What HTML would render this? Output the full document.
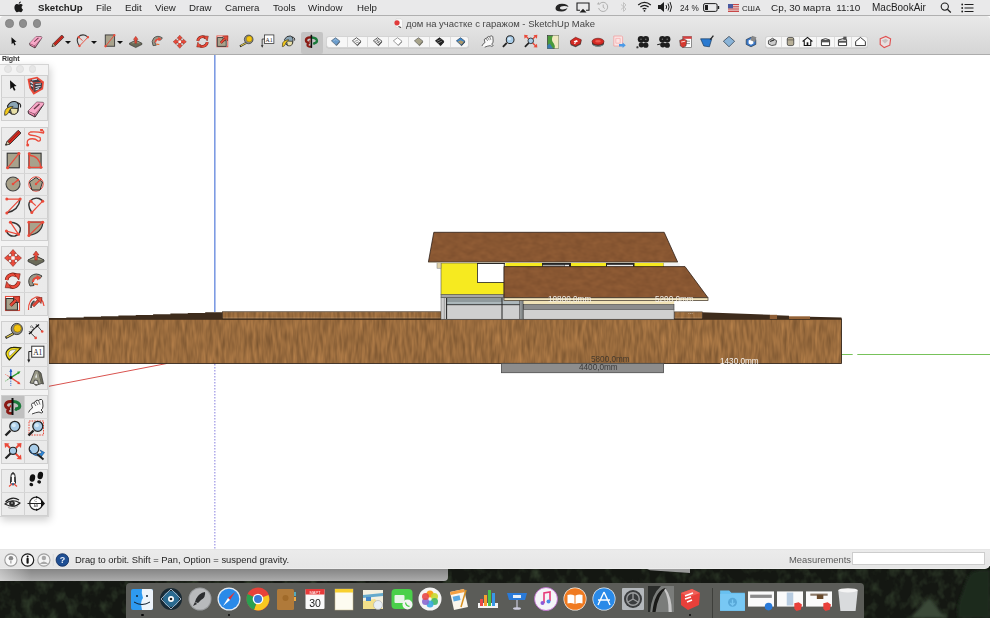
<!DOCTYPE html><html><head><meta charset="utf-8"><style>
*{margin:0;padding:0;box-sizing:border-box}
html,body{width:990px;height:618px;overflow:hidden;background:#fff;font-family:"Liberation Sans",sans-serif}
.a{position:absolute}
span{will-change:transform}
#menubar{left:0;top:0;width:990px;height:15.5px;background:#e9e9ea;border-bottom:1px solid #b0b0b0}
#menubar span{position:absolute;top:2px;font-size:9.7px;color:#1e1e1e;line-height:11px;white-space:nowrap}
#titlebar{left:0;top:15.5px;width:990px;height:39.5px;background:linear-gradient(#e9e9e9,#d5d5d5);border-bottom:1px solid #acacac;border-radius:4px 4px 0 0}
.tl{position:absolute;width:8.4px;height:8.4px;border-radius:50%;background:#8e8e8e;border:0.5px solid #848484}
.ti{position:absolute;top:17px}
.cell{position:absolute;width:23px;height:22.6px;background:linear-gradient(#efefef,#e6e6e6);border:1px solid #d2d2d2;display:flex;align-items:center;justify-content:center}
.cell svg{display:block}
#status{left:0;top:549px;width:990px;height:20px;background:linear-gradient(#ebebeb,#e6e6e6 92%,#f0f0f0);border-top:1px solid #e6e6e6;border-radius:0 0 5px 0}
.dd{position:absolute;width:0;height:0;border-left:3px solid transparent;border-right:3px solid transparent;border-top:3.5px solid #111}
</style></head><body>
<div class="a" style="left:0;top:566px;width:990px;height:52px;background:#141712"></div>
<svg class="a" style="left:0;top:566px" width="990" height="52">
<defs><filter id="forest" color-interpolation-filters="sRGB"><feTurbulence type="fractalNoise" baseFrequency="0.09 0.07" numOctaves="3" seed="21"/><feColorMatrix type="matrix" values="0 0 0 0 0.19  0 0 0 0 0.24  0 0 0 0 0.17  2.2 0 0 0 -1.0"/><feGaussianBlur stdDeviation="0.7"/></filter>
<filter id="blur1"><feGaussianBlur stdDeviation="1.5"/></filter></defs>
<rect width="990" height="52" filter="url(#forest)"/>
<g filter="url(#blur1)">
<path d="M910 52 Q918 44 923 38 Q928 32 931 34 Q936 40 940 46 Q946 50 948 52Z" fill="#3a4838"/>
<path d="M958 52 Q956 40 962 28 Q966 12 972 6 Q980 3 990 4 L990 52Z" fill="#1f2b1f"/>
</g>
</svg>
<div class="a" style="left:0;top:566px;width:448px;height:14.5px;background:linear-gradient(90deg,rgba(255,255,255,0.45),rgba(255,255,255,0) 7%),linear-gradient(#7c7c7c,#939393 50%,#acacac);border-radius:0 0 4px 0"></div>
<div class="a" style="left:640px;top:566px;width:50px;height:7px;background:#9a9a9a;clip-path:polygon(0 0,100% 0,100% 100%,20% 60%)"></div>
<div id="menubar" class="a">
<svg class="a" style="left:13.5px;top:1px" width="10.5" height="11.5" viewBox="0 0 20 22"><path d="M14.5 11.8c0-2.6 2.1-3.8 2.2-3.9-1.2-1.8-3.1-2-3.7-2-1.6-.2-3.1.9-3.9.9-.8 0-2-.9-3.3-.9C4.1 6 2.5 7 1.6 8.6c-1.8 3.2-.5 7.9 1.3 10.4.9 1.3 1.9 2.7 3.2 2.6 1.3-.1 1.8-.8 3.3-.8s2 .8 3.3.8c1.4 0 2.2-1.3 3.1-2.5 1-1.4 1.4-2.8 1.4-2.9-.1 0-2.7-1-2.7-4.4zM12 4c.7-.9 1.2-2 1-3.2-1 0-2.2.7-2.9 1.5-.6.7-1.2 1.9-1 3.1 1.1.1 2.2-.6 2.9-1.4z" fill="#1a1a1a"/></svg>
<span style="left:38px;font-weight:bold;">SketchUp</span>
<span style="left:96px;">File</span>
<span style="left:124.5px;">Edit</span>
<span style="left:154.5px;">View</span>
<span style="left:188.5px;">Draw</span>
<span style="left:225px;">Camera</span>
<span style="left:272.5px;">Tools</span>
<span style="left:308px;">Window</span>
<span style="left:357px;">Help</span>
<svg class="a" style="left:554px;top:1.5px" width="16" height="11" viewBox="0 0 16 11"><path d="M1.5 6 Q2 2 8 1.8 Q14 2 14.5 5 Q12 3.8 8.5 4.2 Q5.5 4.8 6 6.5 Q7 8 10 7.3 Q12.5 6.8 13.5 5.8 Q12.5 9.5 7.5 9.5 Q1.2 9.5 1.5 6Z" fill="#262626"/></svg>
<svg class="a" style="left:575.5px;top:1.8px" width="14" height="11" viewBox="0 0 14 11"><path d="M4 8.2 H1 V1 H13 V8.2 H10" fill="none" stroke="#1e1e1e" stroke-width="1.1"/><path d="M3.5 10.6 L7 6.8 L10.5 10.6Z" fill="#1e1e1e"/></svg>
<svg class="a" style="left:596px;top:1px" width="13" height="12" viewBox="0 0 13 12"><path d="M2.6 7 A4.6 4.6 0 1 0 3.5 3" fill="none" stroke="#b0b0b0" stroke-width="1"/><path d="M7.2 3.5 V6.3 L8.8 7.5" stroke="#b0b0b0" stroke-width="1" fill="none"/><path d="M0.8 3.2 L3.8 3.8 L2.8 1Z" fill="#b0b0b0"/></svg>
<svg class="a" style="left:620px;top:1px" width="8" height="12" viewBox="0 0 8 12"><path d="M1 3.5 L6 8 L3.5 10.5 V1.5 L6 4 L1 8.5" fill="none" stroke="#c0c0c0" stroke-width="0.9"/></svg>
<svg class="a" style="left:637px;top:1.2px" width="15" height="11" viewBox="0 0 15 11"><path d="M1.2 4 Q7.5 -1.2 13.8 4" stroke="#1e1e1e" stroke-width="1.3" fill="none"/><path d="M3.4 6 Q7.5 2.6 11.6 6" stroke="#1e1e1e" stroke-width="1.3" fill="none"/><path d="M5.6 8 Q7.5 6.6 9.4 8" stroke="#1e1e1e" stroke-width="1.3" fill="none"/><circle cx="7.5" cy="9.8" r="0.9" fill="#1e1e1e"/></svg>
<svg class="a" style="left:657px;top:0.8px" width="16" height="12" viewBox="0 0 16 12"><path d="M1 4 H3.5 L7 1 V11 L3.5 8 H1Z" fill="#1e1e1e"/><path d="M9 4 Q10.3 6 9 8 M11 2.5 Q13.2 6 11 9.5 M13 1 Q16 6 13 11" stroke="#1e1e1e" stroke-width="1" fill="none"/></svg>
<span style="left:680px;font-size:8.2px;top:2.5px">24 %</span>
<svg class="a" style="left:703px;top:3px" width="17" height="9" viewBox="0 0 17 9"><rect x="0.6" y="0.6" width="13.5" height="7.8" rx="1.5" fill="none" stroke="#1e1e1e" stroke-width="1"/><rect x="2" y="2" width="3" height="5" fill="#1e1e1e"/><rect x="14.8" y="3" width="1.4" height="3" fill="#1e1e1e"/></svg>
<svg class="a" style="left:728px;top:3.5px" width="11" height="8" viewBox="0 0 11 8"><rect width="11" height="8" fill="#c84848"/><rect y="1.2" width="11" height="1" fill="#eee"/><rect y="3.4" width="11" height="1" fill="#eee"/><rect y="5.6" width="11" height="1" fill="#eee"/><rect width="5" height="4.3" fill="#4a5aa0"/></svg>
<span style="left:742px;font-size:7.8px;top:3px;letter-spacing:0.2px">США</span>
<span style="left:770.5px;font-size:9.95px">Ср, 30 марта&nbsp; 11:10</span>
<span style="left:872px;font-size:10px">MacBookAir</span>
<svg class="a" style="left:940px;top:2px" width="12" height="11" viewBox="0 0 12 11"><circle cx="4.8" cy="4.6" r="3.6" fill="none" stroke="#1e1e1e" stroke-width="1.1"/><path d="M7.4 7.2 L10.8 10.5" stroke="#1e1e1e" stroke-width="1.3"/></svg>
<svg class="a" style="left:961px;top:2.5px" width="13" height="10" viewBox="0 0 13 10"><circle cx="1.2" cy="1.5" r="0.9" fill="#1e1e1e"/><circle cx="1.2" cy="5" r="0.9" fill="#1e1e1e"/><circle cx="1.2" cy="8.5" r="0.9" fill="#1e1e1e"/><path d="M3.5 1.5 H12.5 M3.5 5 H12.5 M3.5 8.5 H12.5" stroke="#1e1e1e" stroke-width="1.1"/></svg>
</div>
<div id="titlebar" class="a">
<div class="tl" style="left:5.4px;top:3.9px"></div>
<div class="tl" style="left:19.1px;top:3.9px"></div>
<div class="tl" style="left:32.7px;top:3.9px"></div>
<svg class="a" style="left:393px;top:2.5px" width="10" height="11" viewBox="0 0 10 11"><path d="M3 0.8 H8 L9.5 2.3 V9.5 H3Z" fill="#fafafa" stroke="#ccc" stroke-width="0.5"/><circle cx="4" cy="4.8" r="2.6" fill="#e03a3a"/><path d="M5.5 8.5 L8 9.5" stroke="#333" stroke-width="1"/></svg>
<span class="a" style="left:406px;top:2.2px;font-size:9.47px;color:#444;white-space:nowrap">дом на участке с гаражом - SketchUp Make</span>
<div class="a" style="left:301px;top:16px;width:21.5px;height:22px;background:#c4c4c4;border-radius:2px"></div>
<div class="ti" style="left:5.550000000000001px;top:18.25px"><svg width="15.5" height="15.5" viewBox="0 0 20 20" ><path d="M7 4.2 L7.3 13.2 L9.3 11.2 L11 14.8 L12.5 14 L10.9 10.4 L13.6 10.1 Z" fill="#111"/></svg></div>
<div class="ti" style="left:28.25px;top:18.25px"><svg width="15.5" height="15.5" viewBox="0 0 20 20" ><path d="M2.1 12 L10.6 3.2 L17.1 3.4 L17.9 5 L9 18 L2.5 14.5Z" fill="#f08ab0" stroke="#3a2a30" stroke-width="1"/><path d="M2.1 12 L8.7 14.8 L17.9 5" fill="none" stroke="#3a2a30" stroke-width="0.8"/><path d="M8.7 14.8 L9 18" stroke="#3a2a30" stroke-width="0.8"/><path d="M2.1 12 L10.6 3.2 L17.1 3.4 L17.9 5 L8.7 14.8Z" fill="#f8a8c8"/><path d="M8 10 L13.5 5" stroke="#6a3a4a" stroke-width="1.3"/></svg></div>
<div class="ti" style="left:49.75px;top:18.25px"><svg width="15.5" height="15.5" viewBox="0 0 20 20" ><path d="M2.6 16.1 L4.3 12.2 L15.2 1.3 L18 4.1 L7 15Z" fill="#d42a20" stroke="#2a2a2a" stroke-width="0.9"/><path d="M5.5 13.5 L16.5 2.7" stroke="#8a1a10" stroke-width="0.7"/><path d="M2.6 16.1 L4.3 12.2 L7 15Z" fill="#d8c8a0" stroke="#2a2a2a" stroke-width="0.6"/><path d="M2.6 16.1 L3.3 14.5 L4.3 15.5Z" fill="#222"/></svg></div>
<div class="ti" style="left:75.25px;top:18.25px"><svg width="15.5" height="15.5" viewBox="0 0 20 20" ><path d="M5.8 15.5 Q1 9 4 4 Q8 0 13 1.5 Q16 3 16.7 4.2" fill="none" stroke="#333" stroke-width="1.4"/><path d="M4.9 4.2 L9.8 8.6 M16.7 4.2 L5.8 15.5" fill="none" stroke="#ea4a3a" stroke-width="1.2"/><circle cx="4.9" cy="4.2" r="1.5" fill="#ea4a3a"/><circle cx="16.7" cy="4.2" r="1.5" fill="#ea4a3a"/><circle cx="5.8" cy="15.5" r="1.5" fill="#ea4a3a"/></svg></div>
<div class="ti" style="left:102.25px;top:18.25px"><svg width="15.5" height="15.5" viewBox="0 0 20 20" ><rect x="4.2" y="1.2" width="12.1" height="14.6" fill="#a8a28c" stroke="#333" stroke-width="1.1"/><path d="M4.6 15.8 L15.9 1.6" stroke="#ea4a3a" stroke-width="1.2"/><circle cx="4.6" cy="15.8" r="1.5" fill="#ea4a3a"/><circle cx="15.9" cy="1.6" r="1.5" fill="#ea4a3a"/></svg></div>
<div class="ti" style="left:128.25px;top:18.25px"><svg width="15.5" height="15.5" viewBox="0 0 20 20" ><path d="M2 12 L10 8 L18 12 L10 16 Z" fill="#9a9a80" stroke="#333" stroke-width="1"/><path d="M2 12 L2 13.5 L10 17.5 L18 13.5 L18 12" fill="#6a6a58" stroke="#333" stroke-width="0.8"/><path d="M10 3 L13 7 L11.2 7 L11.2 12 L8.8 12 L8.8 7 L7 7Z" fill="#ea4a3a" stroke="#8a1a10" stroke-width="0.5"/></svg></div>
<div class="ti" style="left:149.75px;top:18.25px"><svg width="15.5" height="15.5" viewBox="0 0 20 20" ><path d="M4 15 Q1 9 5 5 Q10 1 16 5 L13.5 8 Q10 6 7.5 8 Q5 11 8 14.5Z" fill="#9a9888" stroke="#333" stroke-width="0.9"/><path d="M7 11 Q7 7 12 6.5" stroke="#ea4a3a" stroke-width="2" fill="none"/><path d="M10.5 4 L15 6.5 L11 9.5Z" fill="#ea4a3a"/><path d="M8 13 L12 13.5" stroke="#e86a30" stroke-width="1.5"/></svg></div>
<div class="ti" style="left:172.25px;top:18.25px"><svg width="15.5" height="15.5" viewBox="0 0 20 20" ><path d="M10 1.5 L13.5 5.5 L11.5 5.5 L11.5 8.5 L14.5 8.5 L14.5 6.5 L18.5 10 L14.5 13.5 L14.5 11.5 L11.5 11.5 L11.5 14.5 L13.5 14.5 L10 18.5 L6.5 14.5 L8.5 14.5 L8.5 11.5 L5.5 11.5 L5.5 13.5 L1.5 10 L5.5 6.5 L5.5 8.5 L8.5 8.5 L8.5 5.5 L6.5 5.5Z" fill="#ea4a3a" stroke="#7a1a10" stroke-width="0.5"/><rect x="8.3" y="8.3" width="3.4" height="3.4" fill="#f4f4f4"/></svg></div>
<div class="ti" style="left:194.75px;top:18.25px"><svg width="15.5" height="15.5" viewBox="0 0 20 20" ><path d="M3.6 9 A6.2 6.2 0 0 1 13.8 5" stroke="#6a1a10" stroke-width="3.6" fill="none"/><path d="M3.6 9 A6.2 6.2 0 0 1 13.8 5" stroke="#ea4a3a" stroke-width="2.4" fill="none"/><path d="M11 2.5 L17.2 2.8 L15.8 9Z" fill="#ea4a3a" stroke="#6a1a10" stroke-width="0.6"/><path d="M15.8 10.5 A6.2 6.2 0 0 1 5.6 14.5" stroke="#6a1a10" stroke-width="3.6" fill="none"/><path d="M15.8 10.5 A6.2 6.2 0 0 1 5.6 14.5" stroke="#ea4a3a" stroke-width="2.4" fill="none"/><path d="M8.4 17 L2.2 16.7 L3.6 10.5Z" fill="#ea4a3a" stroke="#6a1a10" stroke-width="0.6"/></svg></div>
<div class="ti" style="left:215.25px;top:18.25px"><svg width="15.5" height="15.5" viewBox="0 0 20 20" ><rect x="2.5" y="2.5" width="14" height="14" fill="#fff" stroke="#ea4a3a" stroke-width="1.1"/><path d="M3 4.5 H10.5 V8.5 H14.5 V16 H3Z" fill="#a8a28c" stroke="#333" stroke-width="1.1"/><path d="M7.5 11.5 L13 6" stroke="#6a1a10" stroke-width="3.2"/><path d="M7.5 11.5 L13 6" stroke="#ea4a3a" stroke-width="2"/><path d="M10 3 L16.5 2.5 L16 9Z" fill="#ea4a3a" stroke="#6a1a10" stroke-width="0.6"/></svg></div>
<div class="ti" style="left:238.25px;top:18.25px"><svg width="15.5" height="15.5" viewBox="0 0 20 20" ><path d="M2.5 15.9 L10.5 11.5" stroke="#222" stroke-width="2.6"/><path d="M3.5 15.2 L10.5 11.5" stroke="#e8d050" stroke-width="1.3"/><circle cx="13.8" cy="7" r="5.6" fill="#8a8a88" stroke="#333" stroke-width="0.9"/><circle cx="14.5" cy="6.4" r="3.8" fill="#f4c410" stroke="#6a5a10" stroke-width="0.5"/></svg></div>
<div class="ti" style="left:260.25px;top:18.25px"><svg width="15.5" height="15.5" viewBox="0 0 20 20" ><rect x="5.7" y="1.2" width="12.2" height="11" fill="#fff" stroke="#333" stroke-width="1"/><text x="7.2" y="9.8" font-size="7.5" font-family="Liberation Serif" fill="#222">A1</text><path d="M5.7 6.5 L2.8 6.5 L2.8 15" stroke="#222" stroke-width="1" fill="none"/><path d="M1.2 14.5 L2.8 17.8 L4.4 14.5Z" fill="#222"/></svg></div>
<div class="ti" style="left:281.25px;top:18.25px"><svg width="15.5" height="15.5" viewBox="0 0 20 20" ><path d="M4.5 7 Q7 2 12 2.5 Q16 3.5 15.5 7 L15 12 Q13 15.5 9 15 L6 13Z" fill="#8aa4b4" stroke="#222" stroke-width="1.1"/><path d="M7 9 L15 9.5 L14.5 13.5 Q12 16.5 8.5 15Z" fill="#e8e0a8" stroke="#222" stroke-width="0.9"/><path d="M14 4 Q18.5 4 17.5 8.5" fill="none" stroke="#222" stroke-width="1.1"/><path d="M1.7 16.3 Q1 10.5 5 8.5 Q8.5 7 10.2 7.5 Q6.5 10 5.5 13.5 Q4 16.5 1.7 16.3Z" fill="#f2c81a" stroke="#333" stroke-width="0.8"/></svg></div>
<div class="ti" style="left:303.95px;top:18.25px"><svg width="15.5" height="15.5" viewBox="0 0 20 20" ><path d="M9 4.5 Q3 4 2.5 8 Q2.5 11 7 11.5" stroke="#8a1a14" stroke-width="3" fill="none"/><path d="M7 11.5 Q4 12.5 4.5 15 Q6 17 9.5 16" stroke="#8a1a14" stroke-width="2.6" fill="none"/><path d="M10 4.5 Q16.5 5 16.8 9 Q16.5 12 12 12" stroke="#1a7a3a" stroke-width="3" fill="none"/><path d="M11 13 L13.5 10.5 L14 14Z" fill="#1a7a3a"/><path d="M9.5 1 L9.5 18" stroke="#111" stroke-width="2"/><path d="M6 9.5 L8 7.5 L8.5 11Z" fill="#b02a20"/></svg></div>
<div class="dd" style="left:64.5px;top:25px"></div>
<div class="dd" style="left:91px;top:25px"></div>
<div class="dd" style="left:117px;top:25px"></div>
<div class="a" style="left:326px;top:20px;width:143px;height:12.5px;background:#f7f7f7;border:1px solid #d4d4d4;border-radius:3px;box-shadow:0 0.5px 0 #c0c0c0"></div>
<div class="a" style="left:346.7px;top:21px;width:1px;height:10.5px;background:#dcdcdc"></div>
<div class="a" style="left:367px;top:21px;width:1px;height:10.5px;background:#dcdcdc"></div>
<div class="a" style="left:387.5px;top:21px;width:1px;height:10.5px;background:#dcdcdc"></div>
<div class="a" style="left:408px;top:21px;width:1px;height:10.5px;background:#dcdcdc"></div>
<div class="a" style="left:429px;top:21px;width:1px;height:10.5px;background:#dcdcdc"></div>
<div class="a" style="left:450px;top:21px;width:1px;height:10.5px;background:#dcdcdc"></div>
<svg class="ti" style="left:329.8px;top:20.5px" width="11" height="11" viewBox="0 0 16 16"><path d="M2 7 L8 2.5 L14.5 7.5 L9 13.5Z" fill="#6a9ccc" stroke="#456" stroke-width="0.9"/><path d="M9 13.5 L14.5 7.5 L14 9.5 L9.5 14.5Z" fill="#456"/><path d="M5 7 L8.5 5 L11 7.5" stroke="#b8d4ec" stroke-width="0.8" fill="none"/></svg>
<svg class="ti" style="left:350.8px;top:20.5px" width="11" height="11" viewBox="0 0 16 16"><path d="M2 7 L8 2.5 L14.5 7.5 L9 13.5Z" fill="#fafafa" stroke="#333" stroke-width="1.1"/><path d="M9 13.5 L14.5 7.5 L14.3 9.5 L9.3 15Z" fill="#444"/><path d="M5 8 L10 6 M6.5 10.5 L11.5 8.5" stroke="#444" stroke-width="0.8"/></svg>
<svg class="ti" style="left:372.0px;top:20.5px" width="11" height="11" viewBox="0 0 16 16"><path d="M2 7 L8 2.5 L14.5 7.5 L9 13.5Z" fill="#f0f0f0" stroke="#333" stroke-width="1.1"/><path d="M9 13.5 L14.5 7.5 L14.3 9.5 L9.3 15Z" fill="#444"/><path d="M4.5 8.5 L9.5 5.5 M6 11 L11.5 7.5 M7 4.5 L10.5 11" stroke="#444" stroke-width="0.8"/></svg>
<svg class="ti" style="left:392.0px;top:20.5px" width="11" height="11" viewBox="0 0 16 16"><path d="M2 7 L8 2.5 L14.5 7.5 L9 13.5Z" fill="#fff" stroke="#666" stroke-width="0.9"/><path d="M9 13.5 L14.5 7.5 L14.3 9 L9.3 14.5Z" fill="#888"/></svg>
<svg class="ti" style="left:412.5px;top:20.5px" width="11" height="11" viewBox="0 0 16 16"><path d="M2 7 L8 2.5 L14.5 7.5 L9 13.5Z" fill="#a8a48a" stroke="#555" stroke-width="0.9"/><path d="M9 13.5 L14.5 7.5 L14.3 9.5 L9.3 15Z" fill="#6a6858"/></svg>
<svg class="ti" style="left:433.5px;top:20.5px" width="11" height="11" viewBox="0 0 16 16"><path d="M2 7 L8 2.5 L14.5 7.5 L9 13.5Z" fill="#1a1a1a" stroke="#111" stroke-width="0.9"/><path d="M9 13.5 L14.5 7.5 L14.3 9.5 L9.3 15Z" fill="#111"/><path d="M4.5 7.5 L9.5 5 M6 10 L11.5 7.5" stroke="#bbb" stroke-width="0.9"/></svg>
<svg class="ti" style="left:454.5px;top:20.5px" width="11" height="11" viewBox="0 0 16 16"><path d="M2 7 L8 2.5 L14.5 7.5 L9 13.5Z" fill="#3a88d0" stroke="#234" stroke-width="0.9"/><path d="M4 8.5 L8 6 L13 8.5 L9.5 12.5Z" fill="#b09868"/><path d="M9 13.5 L14.5 7.5 L14.3 9.5 L9.3 15Z" fill="#234"/></svg>
<div class="ti" style="left:479.75px;top:18.25px"><svg width="15.5" height="15.5" viewBox="0 0 20 20" ><path d="M2.5 15.5 Q4 12 6.5 11 L5.5 7.5 Q6 5.5 8 6 L9.5 4 Q11 2.5 12.5 3.5 L14 2.5 Q16 2 16.5 3.5 L17 9 Q17 12 15 13 L17 15 Q15.5 17 13 15 Q9.5 15.5 6 17" fill="#fafafa" stroke="#2a2a2a" stroke-width="0.9"/><path d="M8 6 L10 9 M9.5 4 L12 8 M12.5 3.5 L14 7.5" stroke="#2a2a2a" stroke-width="0.7"/></svg></div>
<div class="ti" style="left:501.25px;top:18.25px"><svg width="15.5" height="15.5" viewBox="0 0 20 20" ><path d="M2.5 16.5 L7.5 11.5" stroke="#222" stroke-width="2.4"/><circle cx="11.8" cy="7.3" r="5" fill="#a8cce8" stroke="#222" stroke-width="1.3"/><circle cx="10.8" cy="6.2" r="2" fill="#d4e8f6"/></svg></div>
<div class="ti" style="left:523.25px;top:18.25px"><svg width="15.5" height="15.5" viewBox="0 0 20 20" ><path d="M2.5 16.5 L7.5 11.5" stroke="#222" stroke-width="2.2"/><path d="M12.5 11.5 L16.5 15.5 M7 6 L4 3 M13 6 L16 3" stroke="#ea4a3a" stroke-width="1.8"/><path d="M1.5 1 L6.5 1.5 L2 6Z M18.5 1 L13.5 1.5 L18 6Z M18.5 17.5 L13.5 17 L18 12.5Z" fill="#ea4a3a"/><circle cx="10" cy="8.8" r="3.6" fill="#a8cce8" stroke="#222" stroke-width="1.1"/></svg></div>
<svg class="ti" style="left:545.0px;top:18.0px" width="16" height="16" viewBox="0 0 20 20"><rect x="3" y="2" width="14" height="16" fill="#4a9a3a" stroke="#333" stroke-width="0.8"/><path d="M10 2 Q7 8 11 12 Q13 15 12 18 L17 18 L17 2Z" fill="#f0e8c0"/><path d="M6 12 L10 18 L3 18 L3 14Z" fill="#3a7ab0"/></svg>
<svg class="ti" style="left:568.0px;top:18.0px" width="16" height="16" viewBox="0 0 20 20"><path d="M2.5 9 L9 4.5 L17 7.5 L16 13 L9.5 16.5 L3.5 14Z" fill="#555" /><path d="M3 8.5 L9.5 4 L16.5 7 L15.5 12 L9.5 15 L3.5 12.5Z" fill="#d42a24" stroke="#6a1a14" stroke-width="0.6"/><path d="M7 9 L11 7.5 L12.5 9.5 L8.5 11Z" fill="#fff"/><path d="M7.5 12 L10 11" stroke="#fff" stroke-width="1"/></svg>
<svg class="ti" style="left:589.5px;top:18.0px" width="16" height="16" viewBox="0 0 20 20"><ellipse cx="10" cy="11.5" rx="7.5" ry="4.5" fill="#444"/><ellipse cx="10" cy="9.5" rx="7.5" ry="4.2" fill="#d42a24" stroke="#5a1a14" stroke-width="0.7"/><ellipse cx="10" cy="9" rx="3.5" ry="1.5" fill="#f05a50"/><path d="M4 14 Q10 17 16 14" stroke="#8aa" stroke-width="0.8" fill="none"/></svg>
<svg class="ti" style="left:611.0px;top:18.0px" width="16" height="16" viewBox="0 0 20 20"><path d="M3.5 2.5 L13.5 2.5 L14.5 3.5 L14.5 15 L3.5 15Z" fill="#fbe4e4" stroke="#f0a0a0" stroke-width="1"/><path d="M6 5.5 L11.5 5.5 L11.5 11.5 L6 11.5Z" fill="none" stroke="#f4b0b0" stroke-width="1"/><path d="M10 12.5 L14.5 12.5 L14.5 10.5 L18.5 14 L14.5 17.5 L14.5 15.5 L10 15.5Z" fill="#4a9ae8"/></svg>
<svg class="ti" style="left:634.5px;top:18.0px" width="16" height="16" viewBox="0 0 20 20"><circle cx="7.5" cy="6.5" r="4" fill="#1e1e1e"/><circle cx="13.5" cy="6.5" r="4" fill="#1e1e1e"/><circle cx="8" cy="13.5" r="3.3" fill="#1e1e1e"/><circle cx="13.5" cy="14" r="3.3" fill="#1e1e1e"/><circle cx="7.5" cy="6.5" r="0.9" fill="#777"/><circle cx="13.5" cy="6.5" r="0.9" fill="#777"/><circle cx="3" cy="16.5" r="1.5" fill="#333" stroke="#ddd" stroke-width="0.5"/></svg>
<svg class="ti" style="left:656.0px;top:18.0px" width="16" height="16" viewBox="0 0 20 20"><circle cx="8" cy="6.5" r="4" fill="#1e1e1e"/><circle cx="14" cy="6.5" r="4" fill="#1e1e1e"/><circle cx="8.5" cy="13.5" r="3.3" fill="#1e1e1e"/><circle cx="14" cy="14" r="3.3" fill="#1e1e1e"/><circle cx="8" cy="6.5" r="0.9" fill="#777"/><circle cx="14" cy="6.5" r="0.9" fill="#777"/><path d="M1.5 13.5 L5.5 12.5" stroke="#222" stroke-width="1.3"/></svg>
<svg class="ti" style="left:678.0px;top:18.0px" width="16" height="16" viewBox="0 0 20 20"><rect x="6" y="3" width="11" height="14" fill="#fff" stroke="#555" stroke-width="0.8"/><rect x="6" y="3" width="11" height="3" fill="#d84040"/><path d="M9 9 H15 M9 12 H15" stroke="#555" stroke-width="0.8"/><path d="M2 8 L7 6 L11 8 L10 15 L6 17 L3 15Z" fill="#d83a30" stroke="#333" stroke-width="0.6"/><path d="M4 10 L9 9" stroke="#fff" stroke-width="1"/></svg>
<svg class="ti" style="left:698.7px;top:18.0px" width="16" height="16" viewBox="0 0 20 20"><path d="M2 6 L16 6 L13 16 L6 15Z" fill="#2a7ad0" stroke="#135" stroke-width="0.8"/><path d="M14 7 L18 2" stroke="#222" stroke-width="1.6"/></svg>
<svg class="ti" style="left:721.0px;top:18.0px" width="16" height="16" viewBox="0 0 20 20"><path d="M3 9 L10 3 L17 9 L10 16Z" fill="#8ab4d8" stroke="#345" stroke-width="1"/></svg>
<svg class="ti" style="left:743.0px;top:18.0px" width="16" height="16" viewBox="0 0 20 20"><path d="M4 7 L10 4 L16 7 L16 13 L10 16 L4 13Z" fill="#3a78c8" stroke="#234" stroke-width="0.8"/><path d="M7 8 L10 6.5 L13 8 L13 12 L10 13.5 L7 12Z" fill="#fff"/><rect x="10" y="3" width="6" height="6" fill="#888" transform="rotate(20 13 6)"/></svg>
<div class="a" style="left:765px;top:20px;width:103px;height:12.5px;background:#f7f7f7;border:1px solid #d4d4d4;border-radius:3px;box-shadow:0 0.5px 0 #c0c0c0"></div>
<div class="a" style="left:781.3px;top:21px;width:1px;height:10.5px;background:#dcdcdc"></div>
<div class="a" style="left:798.8px;top:21px;width:1px;height:10.5px;background:#dcdcdc"></div>
<div class="a" style="left:816.3px;top:21px;width:1px;height:10.5px;background:#dcdcdc"></div>
<div class="a" style="left:833.8px;top:21px;width:1px;height:10.5px;background:#dcdcdc"></div>
<div class="a" style="left:851.3px;top:21px;width:1px;height:10.5px;background:#dcdcdc"></div>
<svg class="ti" style="left:766.0px;top:19.5px" width="13" height="13" viewBox="0 0 16 16"><path d="M3 7 L8 4 L13 7 L12 12 L7 13 L3 11Z" fill="#ccc" stroke="#333" stroke-width="1"/><path d="M5 8 L10 6" stroke="#333" stroke-width="1.4"/></svg>
<svg class="ti" style="left:783.5px;top:19.5px" width="13" height="13" viewBox="0 0 16 16"><rect x="4" y="3" width="8" height="10" rx="2" fill="#b8b098" stroke="#333" stroke-width="0.9"/><path d="M4 6 H12" stroke="#333" stroke-width="0.7"/></svg>
<svg class="ti" style="left:801.0px;top:19.5px" width="13" height="13" viewBox="0 0 16 16"><path d="M2 8 L8 3 L14 8 M4 7 V13 H12 V7" fill="none" stroke="#111" stroke-width="1.3"/><rect x="7" y="9" width="2" height="4" fill="#111"/></svg>
<svg class="ti" style="left:818.5px;top:19.5px" width="13" height="13" viewBox="0 0 16 16"><path d="M3 6 Q8 3 13 6 V13 H3Z" fill="#fff" stroke="#222" stroke-width="1.1"/><rect x="3" y="6" width="10" height="3" fill="#555"/></svg>
<svg class="ti" style="left:836.0px;top:19.5px" width="13" height="13" viewBox="0 0 16 16"><path d="M3 6 L11 4 L13 6 V13 H3Z" fill="#fff" stroke="#222" stroke-width="1.1"/><rect x="3" y="7" width="10" height="2.5" fill="#555"/><rect x="9" y="2" width="4" height="4" fill="#555"/></svg>
<svg class="ti" style="left:853.5px;top:19.5px" width="13" height="13" viewBox="0 0 16 16"><path d="M2 8 L8 3 L14 8 V13 H2Z" fill="#fff" stroke="#222" stroke-width="1.1"/></svg>
<svg class="ti" style="left:877.0px;top:18.0px" width="16" height="16" viewBox="0 0 20 20"><path d="M4 6 L11 3 L17 6 L16 14 L9 17 L4 13Z" fill="#e8e0e0" stroke="#e05050" stroke-width="1.4"/><path d="M6 8 L11 6 L14 8 L10 12Z" fill="#c8c0c0"/></svg>
</div>
<svg class="a" style="left:0;top:0" width="990" height="618" viewBox="0 0 990 618">
<defs>
<filter id="wood" x="0" y="0" width="100%" height="100%" color-interpolation-filters="sRGB">
<feTurbulence type="fractalNoise" baseFrequency="0.32 0.06" numOctaves="2" seed="7" result="n"/>
<feColorMatrix in="n" type="matrix" values="0.3 0 0 0 0.45  0.22 0 0 0 0.31  0.13 0 0 0 0.175  0 0 0 0 1"/>
<feGaussianBlur stdDeviation="0.5 0.9"/>
<feComposite in2="SourceGraphic" operator="in"/>
</filter>
</defs>
<!-- blue axis -->
<line x1="214.8" y1="55" x2="214.8" y2="312" stroke="#7d9be3" stroke-width="1.6"/>
<line x1="214.8" y1="364" x2="214.8" y2="549" stroke="#a9a4e8" stroke-width="1.4" stroke-dasharray="1.5 1.5"/>
<!-- red axis -->
<line x1="166.7" y1="363.5" x2="40" y2="388" stroke="#d9534f" stroke-width="1"/>
<!-- green axis -->
<line x1="841" y1="354.5" x2="852.7" y2="354.5" stroke="#77c25a" stroke-width="1"/><line x1="857.3" y1="354.5" x2="990" y2="354.5" stroke="#77c25a" stroke-width="1"/>
<!-- ground -->
<rect x="49" y="319" width="792.5" height="44.5" fill="#98683a"/>
<rect x="49" y="319" width="792.5" height="44.5" fill="#98683a" filter="url(#wood)"/>
<line x1="49" y1="319" x2="841.5" y2="319" stroke="#3a2a1a" stroke-width="1"/>
<rect x="49" y="319" width="792.5" height="44.5" fill="none" stroke="#2a2018" stroke-width="0.8"/>
<!-- top left wedge -->
<polygon points="49.0,318.1 66.3,318.1 66.3,317.4 83.7,317.4 83.7,316.8 101.0,316.8 101.0,316.2 118.4,316.2 118.4,315.5 135.8,315.5 135.8,314.9 153.1,314.9 153.1,314.2 170.4,314.2 170.4,313.6 187.8,313.6 187.8,313.0 205.2,313.0 205.2,312.3 222.5,312.3 222.5,319 49,319" fill="#3e2c1c"/>
<rect x="222.5" y="311.8" width="218.5" height="7.2" fill="#9a6a3a" filter="url(#wood)"/><rect x="222.5" y="311.8" width="218.5" height="7.2" fill="none" stroke="#3a2818" stroke-width="0.7"/>
<!-- right side strips -->
<rect x="674.4" y="311.9" width="27.8" height="7.1" fill="#946338" filter="url(#wood)"/><rect x="674.4" y="311.9" width="27.8" height="7.1" fill="none" stroke="#3a2818" stroke-width="0.6"/>
<polygon points="702.2,312.2 770,314.8 770,319 702.2,319" fill="#3e2c1c"/>
<rect x="769.8" y="314.8" width="7.2" height="4.2" fill="#8e5e36"/>
<polygon points="777,315.2 789,315.8 789,319 777,319" fill="#3e2c1c"/>
<rect x="789" y="316.3" width="21" height="2.7" fill="#946338"/>
<polygon points="810,316.8 841.5,317.5 841.5,319 810,319" fill="#3a2818"/>

<!-- house -->
<filter id="roofn" x="0" y="0" width="100%" height="100%" color-interpolation-filters="sRGB">
<feTurbulence type="fractalNoise" baseFrequency="0.12 0.2" numOctaves="2" seed="3" result="n"/>
<feColorMatrix in="n" type="matrix" values="0.1 0 0 0 0.485  0.07 0 0 0 0.305  0.04 0 0 0 0.175  0 0 0 0 1"/>
<feComposite in2="SourceGraphic" operator="in"/>
</filter>
<!-- foundation left -->
<rect x="441" y="297.6" width="82" height="21.6" fill="#cfcfcf"/>
<rect x="446.4" y="297.8" width="55.6" height="4.4" fill="#8f999c"/>
<rect x="446.4" y="302.2" width="73" height="2.6" fill="#a9b5b9"/>
<rect x="502" y="297.8" width="18" height="4.4" fill="#aab4b8"/>
<line x1="446.4" y1="304.7" x2="520" y2="304.7" stroke="#2a2a2a" stroke-width="0.9"/>
<line x1="444.3" y1="298" x2="444.3" y2="319" stroke="#777" stroke-width="0.6"/>
<line x1="446.6" y1="298" x2="446.6" y2="319" stroke="#222" stroke-width="1"/>
<line x1="502" y1="298" x2="502" y2="319" stroke="#222" stroke-width="1"/>
<line x1="519.8" y1="300" x2="519.8" y2="319" stroke="#444" stroke-width="0.9"/>
<rect x="520.3" y="300" width="3.2" height="19" fill="#8a8f90"/>
<line x1="523.4" y1="300" x2="523.4" y2="319" stroke="#333" stroke-width="0.7"/>
<rect x="441" y="297.6" width="82" height="21.6" fill="none" stroke="#555" stroke-width="0.5"/>
<!-- foundation right -->
<rect x="523.5" y="300.6" width="150.5" height="4" fill="#f0e2b6"/>
<rect x="523.5" y="304.6" width="150.5" height="5" fill="#8c8c8c" stroke="#3a3a3a" stroke-width="0.6"/>
<rect x="523.5" y="309.6" width="150.5" height="9.6" fill="#d0d0d0" stroke="#555" stroke-width="0.5"/>
<!-- gray band under yellow -->
<rect x="441" y="294.4" width="62.5" height="3.2" fill="#a6a6a6" stroke="#444" stroke-width="0.6"/>
<!-- yellow wall -->
<rect x="441" y="263" width="63" height="31.4" fill="#f6ea20" stroke="#555" stroke-width="0.6"/>
<rect x="477.4" y="263.3" width="26.8" height="19.1" fill="#fff" stroke="#222" stroke-width="0.8"/>
<rect x="437" y="262.8" width="4" height="5.4" fill="#e0d2a8" stroke="#777" stroke-width="0.5"/>
<!-- strip under upper roof -->
<rect x="542" y="262.8" width="122" height="4.2" fill="#222"/><line x1="477" y1="263.4" x2="505" y2="263.4" stroke="#222" stroke-width="1"/>
<rect x="505.4" y="262.8" width="36.6" height="4.2" fill="#f6ea20"/>
<rect x="542.7" y="264.8" width="22" height="2.2" fill="#a8a8a8"/>
<rect x="565" y="264.8" width="4" height="2.2" fill="#eee"/>
<rect x="571" y="262.8" width="35" height="4.2" fill="#f6ea20"/>
<rect x="607" y="264.8" width="26" height="2.2" fill="#eee"/>
<rect x="634.5" y="262.8" width="29.1" height="4.2" fill="#f6ea20"/>
<rect x="663.6" y="263" width="16" height="3" fill="#f2f2f2"/>
<!-- upper roof -->
<polygon points="433.8,232.3 664.2,232.3 677.6,262 428.4,262" fill="#8a5632" filter="url(#roofn)"/>
<polygon points="433.8,232.3 664.2,232.3 677.6,262 428.4,262" fill="none" stroke="#2e2018" stroke-width="0.8"/>
<line x1="428.4" y1="262.4" x2="677.6" y2="262.4" stroke="#b8b0a0" stroke-width="1"/>
<!-- lower roof -->
<polygon points="504,266.6 685,266.6 708,297.8 504,297.8" fill="#8a5632" filter="url(#roofn)"/>
<polygon points="504,266.6 685,266.6 708,297.8 504,297.8" fill="none" stroke="#2e2018" stroke-width="0.8"/>
<rect x="504" y="297.8" width="204" height="2.8" fill="#f3e6bf" stroke="#3a2e20" stroke-width="0.7"/>
<!-- slab under ground -->
<rect x="501.5" y="363.3" width="162" height="9.4" fill="#8d8d8d" stroke="#4a4a4a" stroke-width="0.8"/>
<!-- dimension texts -->
<text x="688" y="314" font-size="6" fill="#f4f0e8" font-family="Liberation Sans">...</text>
<text x="548" y="302" font-size="8.2" fill="#f4f0e8" font-family="Liberation Sans">10800,0mm</text>
<text x="655" y="302" font-size="8.2" fill="#f4f0e8" font-family="Liberation Sans">5200,0mm</text>
<text x="591" y="361.5" font-size="8.2" fill="#463a2c" font-family="Liberation Sans">5800,0mm</text>
<text x="579" y="370" font-size="8.2" fill="#3a3a3a" font-family="Liberation Sans">4400,0mm</text>
<text x="720" y="364" font-size="8.2" fill="#f6f2ec" font-family="Liberation Sans">1430,0mm</text>
</svg>

<span class="a" style="left:2.3px;top:55.3px;font-size:7px;font-weight:bold;color:#333;letter-spacing:-0.1px">Right</span>
<div class="a" style="left:0;top:64px;width:48.6px;height:452.5px;background:#f3f3f3;border:1px solid #d4d4d4;border-left:none;box-shadow:1px 3px 8px rgba(0,0,0,0.2)"></div>
<div class="a" style="left:4px;top:65.3px;width:7.8px;height:7.8px;border-radius:50%;background:#e6e6e6;border:0.5px solid #dedede"></div>
<div class="a" style="left:16.2px;top:65.3px;width:7.8px;height:7.8px;border-radius:50%;background:#e6e6e6;border:0.5px solid #dedede"></div>
<div class="a" style="left:28.5px;top:65.3px;width:7.8px;height:7.8px;border-radius:50%;background:#e6e6e6;border:0.5px solid #dedede"></div>
<div class="a" style="left:1px;top:74.6px;width:47px;height:46.0px;background:linear-gradient(90deg,#ececec,#eaeaea);border:1px solid #cfcfcf"></div>
<div class="a" style="left:23.8px;top:74.6px;width:1px;height:46.0px;background:#d2d2d2"></div>
<div class="a" style="left:1px;top:97.1px;width:47px;height:1px;background:#d6d6d6"></div>
<div class="a" style="left:2.6999999999999993px;top:76.35px"><svg width="20" height="20" viewBox="0 0 20 20" ><path d="M7 4.2 L7.3 13.2 L9.3 11.2 L11 14.8 L12.5 14 L10.9 10.4 L13.6 10.1 Z" fill="#111"/></svg></div>
<div class="a" style="left:25.799999999999997px;top:76.35px"><svg width="20" height="20" viewBox="0 0 20 20" ><path d="M2.5 3.7 L11 1.7 L17.1 6.2 L16.3 12.6 L7.8 17.5 L4.1 11.9Z" fill="#3a4048" stroke="#ea4a3a" stroke-width="1.7"/><path d="M2.5 3.7 L7.8 7 L17.1 6.2 M7.8 7 L7.8 17.5" fill="none" stroke="#ea4a3a" stroke-width="0.9"/><path d="M4.5 6 L7 7.5 M4.8 9 L7 10.5 M9.5 8.5 L15 8 M9.5 11.5 L14.5 10.5 M9.5 14 L13 12.5 M6 4 L11 3.2" stroke="#dde4ee" stroke-width="1.2"/></svg></div>
<div class="a" style="left:2.6999999999999993px;top:98.85px"><svg width="20" height="20" viewBox="0 0 20 20" ><path d="M4.5 7 Q7 2 12 2.5 Q16 3.5 15.5 7 L15 12 Q13 15.5 9 15 L6 13Z" fill="#8aa4b4" stroke="#222" stroke-width="1.1"/><path d="M7 9 L15 9.5 L14.5 13.5 Q12 16.5 8.5 15Z" fill="#e8e0a8" stroke="#222" stroke-width="0.9"/><path d="M14 4 Q18.5 4 17.5 8.5" fill="none" stroke="#222" stroke-width="1.1"/><path d="M1.7 16.3 Q1 10.5 5 8.5 Q8.5 7 10.2 7.5 Q6.5 10 5.5 13.5 Q4 16.5 1.7 16.3Z" fill="#f2c81a" stroke="#333" stroke-width="0.8"/></svg></div>
<div class="a" style="left:25.799999999999997px;top:98.85px"><svg width="20" height="20" viewBox="0 0 20 20" ><path d="M2.1 12 L10.6 3.2 L17.1 3.4 L17.9 5 L9 18 L2.5 14.5Z" fill="#f08ab0" stroke="#3a2a30" stroke-width="1"/><path d="M2.1 12 L8.7 14.8 L17.9 5" fill="none" stroke="#3a2a30" stroke-width="0.8"/><path d="M8.7 14.8 L9 18" stroke="#3a2a30" stroke-width="0.8"/><path d="M2.1 12 L10.6 3.2 L17.1 3.4 L17.9 5 L8.7 14.8Z" fill="#f8a8c8"/><path d="M8 10 L13.5 5" stroke="#6a3a4a" stroke-width="1.3"/></svg></div>
<div class="a" style="left:1px;top:127.3px;width:47px;height:114.0px;background:linear-gradient(90deg,#ececec,#eaeaea);border:1px solid #cfcfcf"></div>
<div class="a" style="left:23.8px;top:127.3px;width:1px;height:114.0px;background:#d2d2d2"></div>
<div class="a" style="left:1px;top:149.9px;width:47px;height:1px;background:#d6d6d6"></div>
<div class="a" style="left:1px;top:172.5px;width:47px;height:1px;background:#d6d6d6"></div>
<div class="a" style="left:1px;top:195.10000000000002px;width:47px;height:1px;background:#d6d6d6"></div>
<div class="a" style="left:1px;top:217.7px;width:47px;height:1px;background:#d6d6d6"></div>
<div class="a" style="left:2.6999999999999993px;top:129.1px"><svg width="20" height="20" viewBox="0 0 20 20" ><path d="M2.6 16.1 L4.3 12.2 L15.2 1.3 L18 4.1 L7 15Z" fill="#d42a20" stroke="#2a2a2a" stroke-width="0.9"/><path d="M5.5 13.5 L16.5 2.7" stroke="#8a1a10" stroke-width="0.7"/><path d="M2.6 16.1 L4.3 12.2 L7 15Z" fill="#d8c8a0" stroke="#2a2a2a" stroke-width="0.6"/><path d="M2.6 16.1 L3.3 14.5 L4.3 15.5Z" fill="#222"/></svg></div>
<div class="a" style="left:25.799999999999997px;top:129.1px"><svg width="20" height="20" viewBox="0 0 20 20" ><path d="M1.7 16.1 Q0 11 4 10 Q9 9 12 12 Q15.5 12.5 14 8.5 Q10 6.5 4 6 Q1 4.5 4.5 3 Q11 2.5 17.5 4 Q18.5 2.5 15.5 0.8" fill="none" stroke="#ea4a3a" stroke-width="1.3"/><circle cx="1.7" cy="16.1" r="1.5" fill="#ea4a3a"/><circle cx="15.5" cy="0.9" r="1.5" fill="#ea4a3a"/></svg></div>
<div class="a" style="left:2.6999999999999993px;top:151.70000000000002px"><svg width="20" height="20" viewBox="0 0 20 20" ><rect x="4.2" y="1.2" width="12.1" height="14.6" fill="#a8a28c" stroke="#333" stroke-width="1.1"/><path d="M4.6 15.8 L15.9 1.6" stroke="#ea4a3a" stroke-width="1.2"/><circle cx="4.6" cy="15.8" r="1.5" fill="#ea4a3a"/><circle cx="15.9" cy="1.6" r="1.5" fill="#ea4a3a"/></svg></div>
<div class="a" style="left:25.799999999999997px;top:151.70000000000002px"><svg width="20" height="20" viewBox="0 0 20 20" ><rect x="2.9" y="1.2" width="12.2" height="14.6" fill="#a8a28c" stroke="#333" stroke-width="1.1"/><path d="M3.3 1.7 L3.3 15.3 L15 15.3 M3.3 3.3 Q14 4 14.6 15.3" fill="none" stroke="#ea4a3a" stroke-width="1.2"/><circle cx="3.3" cy="1.7" r="1.5" fill="#ea4a3a"/><circle cx="3.3" cy="15.3" r="1.5" fill="#ea4a3a"/><circle cx="15" cy="15.3" r="1.5" fill="#ea4a3a"/></svg></div>
<div class="a" style="left:2.6999999999999993px;top:174.3px"><svg width="20" height="20" viewBox="0 0 20 20" ><circle cx="10" cy="10" r="7" fill="#a8a088" stroke="#444" stroke-width="1.1"/><path d="M10 10 L15 6" stroke="#ea4a3a" stroke-width="1.3"/><circle cx="10" cy="10" r="1.3" fill="#ea4a3a"/><circle cx="15" cy="6" r="1.2" fill="#ea4a3a"/></svg></div>
<div class="a" style="left:25.799999999999997px;top:174.3px"><svg width="20" height="20" viewBox="0 0 20 20" ><circle cx="10" cy="10" r="7.2" fill="none" stroke="#ea4a3a" stroke-width="1"/><path d="M10 3.5 L16.5 8 L14 16 L6 16 L3.5 8 Z" fill="#a8a088" stroke="#333" stroke-width="1"/><path d="M10 10 L15 5" stroke="#ea4a3a" stroke-width="1.3"/><circle cx="10" cy="10" r="1.2" fill="#ea4a3a"/></svg></div>
<div class="a" style="left:2.6999999999999993px;top:196.90000000000003px"><svg width="20" height="20" viewBox="0 0 20 20" ><path d="M17.1 2.1 Q16 13 3.8 15.9" fill="none" stroke="#333" stroke-width="1.4"/><path d="M3.8 2.1 L17.1 2.1 L3.8 15.9" fill="none" stroke="#ea4a3a" stroke-width="1.2"/><circle cx="3.8" cy="2.1" r="1.5" fill="#ea4a3a"/><circle cx="17.1" cy="2.1" r="1.5" fill="#ea4a3a"/><circle cx="3.8" cy="15.9" r="1.5" fill="#ea4a3a"/></svg></div>
<div class="a" style="left:25.799999999999997px;top:196.90000000000003px"><svg width="20" height="20" viewBox="0 0 20 20" ><path d="M5.8 15.5 Q1 9 4 4 Q8 0 13 1.5 Q16 3 16.7 4.2" fill="none" stroke="#333" stroke-width="1.4"/><path d="M4.9 4.2 L9.8 8.6 M16.7 4.2 L5.8 15.5" fill="none" stroke="#ea4a3a" stroke-width="1.2"/><circle cx="4.9" cy="4.2" r="1.5" fill="#ea4a3a"/><circle cx="16.7" cy="4.2" r="1.5" fill="#ea4a3a"/><circle cx="5.8" cy="15.5" r="1.5" fill="#ea4a3a"/></svg></div>
<div class="a" style="left:2.6999999999999993px;top:219.5px"><svg width="20" height="20" viewBox="0 0 20 20" ><path d="M7.4 2.2 Q15 2.5 17.3 8 Q18 14 12 16 Q6 17 3.4 11.1" fill="none" stroke="#333" stroke-width="1.4"/><path d="M7.4 2.2 L15.5 14.3 L3.4 11.1" fill="none" stroke="#ea4a3a" stroke-width="1.2"/><circle cx="7.4" cy="2.2" r="1.5" fill="#ea4a3a"/><circle cx="15.5" cy="14.3" r="1.5" fill="#ea4a3a"/><circle cx="3.4" cy="11.1" r="1.5" fill="#ea4a3a"/></svg></div>
<div class="a" style="left:25.799999999999997px;top:219.5px"><svg width="20" height="20" viewBox="0 0 20 20" ><path d="M2.9 2.2 L16.7 2.2 Q16.5 13 2.9 15.5Z" fill="#a8a28c" stroke="#333" stroke-width="1.2"/><path d="M2.9 15.5 L2.9 2.2 L16.7 2.2 L2.9 15.5" fill="none" stroke="#ea4a3a" stroke-width="1.2"/><circle cx="2.9" cy="2.2" r="1.5" fill="#ea4a3a"/><circle cx="16.7" cy="2.2" r="1.5" fill="#ea4a3a"/><circle cx="2.9" cy="15.5" r="1.5" fill="#ea4a3a"/></svg></div>
<div class="a" style="left:1px;top:246.4px;width:47px;height:69.55000000000001px;background:linear-gradient(90deg,#ececec,#eaeaea);border:1px solid #cfcfcf"></div>
<div class="a" style="left:23.8px;top:246.4px;width:1px;height:69.55000000000001px;background:#d2d2d2"></div>
<div class="a" style="left:1px;top:269.25px;width:47px;height:1px;background:#d6d6d6"></div>
<div class="a" style="left:1px;top:292.1px;width:47px;height:1px;background:#d6d6d6"></div>
<div class="a" style="left:2.6999999999999993px;top:248.325px"><svg width="20" height="20" viewBox="0 0 20 20" ><path d="M10 1.5 L13.5 5.5 L11.5 5.5 L11.5 8.5 L14.5 8.5 L14.5 6.5 L18.5 10 L14.5 13.5 L14.5 11.5 L11.5 11.5 L11.5 14.5 L13.5 14.5 L10 18.5 L6.5 14.5 L8.5 14.5 L8.5 11.5 L5.5 11.5 L5.5 13.5 L1.5 10 L5.5 6.5 L5.5 8.5 L8.5 8.5 L8.5 5.5 L6.5 5.5Z" fill="#ea4a3a" stroke="#7a1a10" stroke-width="0.5"/><rect x="8.3" y="8.3" width="3.4" height="3.4" fill="#f4f4f4"/></svg></div>
<div class="a" style="left:25.799999999999997px;top:248.325px"><svg width="20" height="20" viewBox="0 0 20 20" ><path d="M2 12 L10 8 L18 12 L10 16 Z" fill="#9a9a80" stroke="#333" stroke-width="1"/><path d="M2 12 L2 13.5 L10 17.5 L18 13.5 L18 12" fill="#6a6a58" stroke="#333" stroke-width="0.8"/><path d="M10 3 L13 7 L11.2 7 L11.2 12 L8.8 12 L8.8 7 L7 7Z" fill="#ea4a3a" stroke="#8a1a10" stroke-width="0.5"/></svg></div>
<div class="a" style="left:2.6999999999999993px;top:271.175px"><svg width="20" height="20" viewBox="0 0 20 20" ><path d="M3.6 9 A6.2 6.2 0 0 1 13.8 5" stroke="#6a1a10" stroke-width="3.6" fill="none"/><path d="M3.6 9 A6.2 6.2 0 0 1 13.8 5" stroke="#ea4a3a" stroke-width="2.4" fill="none"/><path d="M11 2.5 L17.2 2.8 L15.8 9Z" fill="#ea4a3a" stroke="#6a1a10" stroke-width="0.6"/><path d="M15.8 10.5 A6.2 6.2 0 0 1 5.6 14.5" stroke="#6a1a10" stroke-width="3.6" fill="none"/><path d="M15.8 10.5 A6.2 6.2 0 0 1 5.6 14.5" stroke="#ea4a3a" stroke-width="2.4" fill="none"/><path d="M8.4 17 L2.2 16.7 L3.6 10.5Z" fill="#ea4a3a" stroke="#6a1a10" stroke-width="0.6"/></svg></div>
<div class="a" style="left:25.799999999999997px;top:271.175px"><svg width="20" height="20" viewBox="0 0 20 20" ><path d="M4 15 Q1 9 5 5 Q10 1 16 5 L13.5 8 Q10 6 7.5 8 Q5 11 8 14.5Z" fill="#9a9888" stroke="#333" stroke-width="0.9"/><path d="M7 11 Q7 7 12 6.5" stroke="#ea4a3a" stroke-width="2" fill="none"/><path d="M10.5 4 L15 6.5 L11 9.5Z" fill="#ea4a3a"/><path d="M8 13 L12 13.5" stroke="#e86a30" stroke-width="1.5"/></svg></div>
<div class="a" style="left:2.6999999999999993px;top:294.02500000000003px"><svg width="20" height="20" viewBox="0 0 20 20" ><rect x="2.5" y="2.5" width="14" height="14" fill="#fff" stroke="#ea4a3a" stroke-width="1.1"/><path d="M3 4.5 H10.5 V8.5 H14.5 V16 H3Z" fill="#a8a28c" stroke="#333" stroke-width="1.1"/><path d="M7.5 11.5 L13 6" stroke="#6a1a10" stroke-width="3.2"/><path d="M7.5 11.5 L13 6" stroke="#ea4a3a" stroke-width="2"/><path d="M10 3 L16.5 2.5 L16 9Z" fill="#ea4a3a" stroke="#6a1a10" stroke-width="0.6"/></svg></div>
<div class="a" style="left:25.799999999999997px;top:294.02500000000003px"><svg width="20" height="20" viewBox="0 0 20 20" ><path d="M2.5 16 Q2 6 10 3 Q16 2 18 12" fill="none" stroke="#ea4a3a" stroke-width="1.2"/><path d="M5 14 Q5 9 8.5 7" fill="none" stroke="#444" stroke-width="1.6"/><path d="M7 12 L12.5 6.5" stroke="#6a1a10" stroke-width="3"/><path d="M7 12 L12.5 6.5" stroke="#ea4a3a" stroke-width="1.9"/><path d="M10 4 L16 3.5 L15 9.5Z" fill="#ea4a3a" stroke="#6a1a10" stroke-width="0.6"/></svg></div>
<div class="a" style="left:1px;top:320.5px;width:47px;height:69.85px;background:linear-gradient(90deg,#ececec,#eaeaea);border:1px solid #cfcfcf"></div>
<div class="a" style="left:23.8px;top:320.5px;width:1px;height:69.85px;background:#d2d2d2"></div>
<div class="a" style="left:1px;top:343.45px;width:47px;height:1px;background:#d6d6d6"></div>
<div class="a" style="left:1px;top:366.4px;width:47px;height:1px;background:#d6d6d6"></div>
<div class="a" style="left:2.6999999999999993px;top:322.475px"><svg width="20" height="20" viewBox="0 0 20 20" ><path d="M2.5 15.9 L10.5 11.5" stroke="#222" stroke-width="2.6"/><path d="M3.5 15.2 L10.5 11.5" stroke="#e8d050" stroke-width="1.3"/><circle cx="13.8" cy="7" r="5.6" fill="#8a8a88" stroke="#333" stroke-width="0.9"/><circle cx="14.5" cy="6.4" r="3.8" fill="#f4c410" stroke="#6a5a10" stroke-width="0.5"/></svg></div>
<div class="a" style="left:25.799999999999997px;top:322.475px"><svg width="20" height="20" viewBox="0 0 20 20" ><path d="M4.5 10.7 L11.5 3.7" stroke="#222" stroke-width="1.1"/><path d="M3 9.2 L9.7 15.9 M10 2.2 L16.2 9.5" stroke="#333" stroke-width="0.9"/><path d="M3 12 L6 9.5 M10 5 L13 2.5" stroke="#111" stroke-width="1.5"/><circle cx="9.7" cy="15.9" r="1.3" fill="#ea4a3a"/><circle cx="16.2" cy="9.5" r="1.3" fill="#ea4a3a"/><text x="4" y="7.5" font-size="6" font-family="Liberation Sans" fill="#222" transform="rotate(-40 6 5)">3</text></svg></div>
<div class="a" style="left:2.6999999999999993px;top:345.425px"><svg width="20" height="20" viewBox="0 0 20 20" ><path d="M6.4 15 Q1.5 10 3.5 6.5 Q6 2.5 10 2.4 Q14 2.2 17.9 2.9Z" fill="#f2dc10" stroke="#2a2a10" stroke-width="1.1"/><path d="M6.6 11.5 Q5 9 6 7 Q7.5 5 9.5 4.8 Q11.5 4.6 13.5 4.8Z" fill="#f4f4f4" stroke="#555" stroke-width="0.5"/></svg></div>
<div class="a" style="left:25.799999999999997px;top:345.425px"><svg width="20" height="20" viewBox="0 0 20 20" ><rect x="5.7" y="1.2" width="12.2" height="11" fill="#fff" stroke="#333" stroke-width="1"/><text x="7.2" y="9.8" font-size="7.5" font-family="Liberation Serif" fill="#222">A1</text><path d="M5.7 6.5 L2.8 6.5 L2.8 15" stroke="#222" stroke-width="1" fill="none"/><path d="M1.2 14.5 L2.8 17.8 L4.4 14.5Z" fill="#222"/></svg></div>
<div class="a" style="left:2.6999999999999993px;top:368.375px"><svg width="20" height="20" viewBox="0 0 20 20" ><path d="M7.8 9.6 L7.8 1.5" stroke="#1a5ac8" stroke-width="1.4"/><path d="M6.3 4 L7.8 0.8 L9.3 4Z" fill="#1a5ac8"/><path d="M7.8 9.6 L16 4.5" stroke="#2a9a2a" stroke-width="1.4"/><path d="M14 3.8 L17.5 3.2 L15.8 6.3Z" fill="#2a9a2a"/><path d="M7.8 9.6 L16 15" stroke="#ea4a3a" stroke-width="1.4"/><path d="M14.2 16 L17.5 16.2 L15.8 13.3Z" fill="#ea4a3a"/><path d="M7.8 9.6 L2.5 6.5" stroke="#ea4a3a" stroke-width="0.9" stroke-dasharray="1 0.8"/><path d="M7.8 9.6 L2.5 13" stroke="#2a9a2a" stroke-width="0.9" stroke-dasharray="1 0.8"/><path d="M7.8 9.6 L7.8 18" stroke="#1a5ac8" stroke-width="0.9" stroke-dasharray="1 0.8"/><circle cx="7.8" cy="9.6" r="1.5" fill="#111"/></svg></div>
<div class="a" style="left:25.799999999999997px;top:368.375px"><svg width="20" height="20" viewBox="0 0 20 20" ><path d="M4 15 L9 2.5 L12.5 3 L15.5 15.5 L12.5 16.5 L11.5 12.5 L8.5 12 L7.5 15.5Z" fill="#9a9a88" stroke="#333" stroke-width="0.8"/><path d="M7.5 15.5 L10 17.5 L12.5 16.5 M12.5 3 L15 5 L17.5 16 L15.5 15.5" fill="#6a6a5a" stroke="#333" stroke-width="0.7"/><path d="M9 9.5 L10.5 5.5 L11.2 9.8Z" fill="#e8e8e8"/></svg></div>
<div class="a" style="left:1px;top:394.9px;width:47px;height:68.94999999999999px;background:linear-gradient(90deg,#ececec,#eaeaea);border:1px solid #cfcfcf"></div>
<div class="a" style="left:2px;top:395.9px;width:22px;height:21.65px;background:#c0c0c0"></div>
<div class="a" style="left:23.8px;top:394.9px;width:1px;height:68.94999999999999px;background:#d2d2d2"></div>
<div class="a" style="left:1px;top:417.54999999999995px;width:47px;height:1px;background:#d6d6d6"></div>
<div class="a" style="left:1px;top:440.2px;width:47px;height:1px;background:#d6d6d6"></div>
<div class="a" style="left:2.6999999999999993px;top:396.72499999999997px"><svg width="20" height="20" viewBox="0 0 20 20" ><path d="M9 4.5 Q3 4 2.5 8 Q2.5 11 7 11.5" stroke="#8a1a14" stroke-width="3" fill="none"/><path d="M7 11.5 Q4 12.5 4.5 15 Q6 17 9.5 16" stroke="#8a1a14" stroke-width="2.6" fill="none"/><path d="M10 4.5 Q16.5 5 16.8 9 Q16.5 12 12 12" stroke="#1a7a3a" stroke-width="3" fill="none"/><path d="M11 13 L13.5 10.5 L14 14Z" fill="#1a7a3a"/><path d="M9.5 1 L9.5 18" stroke="#111" stroke-width="2"/><path d="M6 9.5 L8 7.5 L8.5 11Z" fill="#b02a20"/></svg></div>
<div class="a" style="left:25.799999999999997px;top:396.72499999999997px"><svg width="20" height="20" viewBox="0 0 20 20" ><path d="M2.5 15.5 Q4 12 6.5 11 L5.5 7.5 Q6 5.5 8 6 L9.5 4 Q11 2.5 12.5 3.5 L14 2.5 Q16 2 16.5 3.5 L17 9 Q17 12 15 13 L17 15 Q15.5 17 13 15 Q9.5 15.5 6 17" fill="#fafafa" stroke="#2a2a2a" stroke-width="0.9"/><path d="M8 6 L10 9 M9.5 4 L12 8 M12.5 3.5 L14 7.5" stroke="#2a2a2a" stroke-width="0.7"/></svg></div>
<div class="a" style="left:2.6999999999999993px;top:419.37499999999994px"><svg width="20" height="20" viewBox="0 0 20 20" ><path d="M2.5 16.5 L7.5 11.5" stroke="#222" stroke-width="2.4"/><circle cx="11.8" cy="7.3" r="5" fill="#a8cce8" stroke="#222" stroke-width="1.3"/><circle cx="10.8" cy="6.2" r="2" fill="#d4e8f6"/></svg></div>
<div class="a" style="left:25.799999999999997px;top:419.37499999999994px"><svg width="20" height="20" viewBox="0 0 20 20" ><rect x="3" y="2" width="14.5" height="14" fill="none" stroke="#ea4a3a" stroke-width="1" stroke-dasharray="1.6 1"/><path d="M2.5 16.5 L7.5 11.5" stroke="#222" stroke-width="2.4"/><circle cx="11.8" cy="7.3" r="5" fill="#a8cce8" stroke="#222" stroke-width="1.3"/><circle cx="10.8" cy="6.2" r="2" fill="#d4e8f6"/></svg></div>
<div class="a" style="left:2.6999999999999993px;top:442.025px"><svg width="20" height="20" viewBox="0 0 20 20" ><path d="M2.5 16.5 L7.5 11.5" stroke="#222" stroke-width="2.2"/><path d="M12.5 11.5 L16.5 15.5 M7 6 L4 3 M13 6 L16 3" stroke="#ea4a3a" stroke-width="1.8"/><path d="M1.5 1 L6.5 1.5 L2 6Z M18.5 1 L13.5 1.5 L18 6Z M18.5 17.5 L13.5 17 L18 12.5Z" fill="#ea4a3a"/><circle cx="10" cy="8.8" r="3.6" fill="#a8cce8" stroke="#222" stroke-width="1.1"/></svg></div>
<div class="a" style="left:25.799999999999997px;top:442.025px"><svg width="20" height="20" viewBox="0 0 20 20" ><circle cx="8" cy="7" r="4.8" fill="#a8cce8" stroke="#222" stroke-width="1.2"/><path d="M4 8 Q6 14 12 12 L16 11 L14 8 L18.5 10.5 L15 15 L15 13 Q8 16 4 8Z" fill="#2a8ae0" stroke="#1a4a80" stroke-width="0.6"/><path d="M11 12 L17.5 17.5" stroke="#222" stroke-width="2"/></svg></div>
<div class="a" style="left:1px;top:469.3px;width:47px;height:46.8px;background:linear-gradient(90deg,#ececec,#eaeaea);border:1px solid #cfcfcf"></div>
<div class="a" style="left:23.8px;top:469.3px;width:1px;height:46.8px;background:#d2d2d2"></div>
<div class="a" style="left:1px;top:492.2px;width:47px;height:1px;background:#d6d6d6"></div>
<div class="a" style="left:2.6999999999999993px;top:471.25px"><svg width="20" height="20" viewBox="0 0 20 20" ><path d="M10 1.5 Q8 2 8 5 L7.5 12 Q9 14 10 14 Q11 14 12.5 12 L12 5 Q12 2 10 1.5Z" fill="#fff" stroke="#222" stroke-width="1"/><path d="M9 2 L11 2 L11 3.5 L9 3.5Z" fill="#333"/><path d="M8.2 6 L8.2 11 M11.8 6 L11.8 11" stroke="#222" stroke-width="1.1"/><path d="M6 15.5 L9.5 12.5 M14 15.5 L10.5 12.5" stroke="#ea4a3a" stroke-width="1.2"/><path d="M9 12 L11 12 L10.8 14 L9.2 14Z" fill="#3a6a9a"/></svg></div>
<div class="a" style="left:25.799999999999997px;top:471.25px"><svg width="20" height="20" viewBox="0 0 20 20" ><g transform="rotate(12 6 9)"><ellipse cx="6" cy="7" rx="2.7" ry="3.8" fill="#111"/><ellipse cx="6.3" cy="13.6" rx="1.9" ry="1.7" fill="#111"/></g><g transform="rotate(12 14 6)"><ellipse cx="14" cy="4.5" rx="2.7" ry="3.8" fill="#111"/><ellipse cx="14.2" cy="11" rx="1.9" ry="1.7" fill="#111"/></g></svg></div>
<div class="a" style="left:2.6999999999999993px;top:494.15px"><svg width="20" height="20" viewBox="0 0 20 20" ><path d="M2 10 Q9 4 17 9 Q11 15 2 10Z" fill="#f0f0f0" stroke="#222" stroke-width="1.1"/><circle cx="9" cy="9.5" r="2.8" fill="#2a2a2a"/><circle cx="9" cy="9" r="0.8" fill="#ddd"/><path d="M2.5 8 Q9 1.5 16 6" stroke="#222" stroke-width="1.3" fill="none"/><path d="M5 13.5 Q10 16 15 12" stroke="#999" stroke-width="0.8" fill="none"/></svg></div>
<div class="a" style="left:25.799999999999997px;top:494.15px"><svg width="20" height="20" viewBox="0 0 20 20" ><circle cx="10" cy="9.5" r="6.3" fill="#fff" stroke="#222" stroke-width="1.2"/><path d="M1.5 9.5 L15 9.5" stroke="#222" stroke-width="1"/><path d="M15 5 L19 9.5 L15 14Z M10 2 L12.5 3.2 L10 4.4Z M10 14.6 L12.5 15.8 L10 17Z" fill="#111"/><text x="8.6" y="8" font-size="3.5" font-family="Liberation Sans" fill="#333">C</text><text x="7.8" y="13.3" font-size="3.2" font-family="Liberation Sans" fill="#333">AB</text></svg></div>
<div id="status" class="a">
<svg class="a" style="left:3px;top:3px" width="56" height="14" viewBox="0 0 56 14">
<circle cx="7.9" cy="7" r="6.1" fill="#fafafa" stroke="#9a9a9a" stroke-width="1.1"/><path d="M7.9 10.5 L7.9 8" stroke="#8a8a8a" stroke-width="1"/><circle cx="7.9" cy="5.3" r="2.3" fill="#8a8a8a"/>
<circle cx="24.6" cy="7" r="6.1" fill="#fafafa" stroke="#1a1a1a" stroke-width="1.2"/><circle cx="24.6" cy="3.6" r="1" fill="#111"/><rect x="23.5" y="4.8" width="2.2" height="6" rx="1" fill="#111"/>
<circle cx="40.9" cy="7" r="6.1" fill="#f4f4f4" stroke="#a0a0a0" stroke-width="1.1"/><circle cx="40.9" cy="5" r="2.2" fill="#a8a8a8"/><path d="M36.5 11 Q40.9 6 45.3 11" fill="#a8a8a8"/>
<path d="M50.3 1 V13" stroke="#d8d8d8" stroke-width="0.8"/></svg>
<svg class="a" style="left:55px;top:3px" width="14" height="14" viewBox="0 0 14 14"><circle cx="7.4" cy="7" r="6.3" fill="#1f4f94" stroke="#0e2a5a" stroke-width="0.8"/><text x="7.4" y="10.3" text-anchor="middle" font-size="9" font-weight="bold" font-family="Liberation Sans" fill="#e8eef8">?</text></svg>
<span class="a" style="left:74.5px;top:3.5px;font-size:9.4px;color:#262626;white-space:nowrap">Drag to orbit. Shift = Pan, Option = suspend gravity.</span>
<span class="a" style="left:789px;top:3.6px;font-size:9.4px;color:#5a5a5a;white-space:nowrap">Measurements</span>
<div class="a" style="left:852px;top:1.8px;width:133px;height:13.5px;background:#fff;border:1px solid #cdcdcd"></div>
</div>
<div class="a" style="left:126px;top:583px;width:737.5px;height:40px;background:#5b5c58;border-radius:4px 4px 0 0"></div>
<div class="a" style="left:711.5px;top:588px;width:1px;height:30px;background:#3e3f3b"></div>
<svg class="a" style="left:130.4px;top:587.0px" width="24" height="24" viewBox="0 0 24 24"><rect x="1" y="2" width="22" height="21" rx="2" fill="#2e9af0"/><path d="M12 2 L21 2 Q23 2 23 4 L23 21 Q23 23 21 23 L12 23 Q10 14 13 11 Q11 6 12 2Z" fill="#eef4fa"/><circle cx="7" cy="9" r="1" fill="#123"/><circle cx="17" cy="9" r="1" fill="#123"/><path d="M4 15 Q12 20 20 15" stroke="#123" stroke-width="1" fill="none"/></svg>
<svg class="a" style="left:159.0px;top:587.0px" width="24" height="24" viewBox="0 0 24 24"><circle cx="12" cy="12" r="11" fill="#1a2a34"/><circle cx="12" cy="12" r="8" fill="#2a6a90"/><path d="M12 2 L22 12 L12 22 L2 12Z" fill="none" stroke="#9ab" stroke-width="1"/><circle cx="12" cy="12" r="3" fill="#fff"/><circle cx="12" cy="12" r="1.3" fill="#222"/></svg>
<svg class="a" style="left:188.0px;top:587.0px" width="24" height="24" viewBox="0 0 24 24"><circle cx="12" cy="12" r="11.5" fill="#9a9c9e"/><circle cx="12" cy="12" r="10.5" fill="#b8babc"/><path d="M17 5 Q11 6 8 12 L7 15 L10 16 L13 13 Q18 10 17 5Z" fill="#2c2e30"/><path d="M7 15 L5 19 L9 17Z" fill="#2c2e30"/></svg>
<svg class="a" style="left:216.8px;top:587.0px" width="24" height="24" viewBox="0 0 24 24"><circle cx="12" cy="12" r="11.5" fill="#e8eef4"/><circle cx="12" cy="12" r="10.3" fill="#2a8ae8"/><path d="M18 5 L13 13 L11 11Z" fill="#e83030"/><path d="M6 19 L11 11 L13 13Z" fill="#fff"/></svg>
<svg class="a" style="left:245.60000000000002px;top:587.0px" width="24" height="24" viewBox="0 0 24 24"><circle cx="12" cy="12" r="11.5" fill="#e8423a"/><path d="M12 12 L22.5 8 A11.5 11.5 0 0 1 8 22.8Z" fill="#f8c820"/><path d="M12 12 L8 22.8 A11.5 11.5 0 0 1 1.5 7Z" fill="#2aa050"/><circle cx="12" cy="12" r="5.3" fill="#fff"/><circle cx="12" cy="12" r="4" fill="#3a7ad8"/></svg>
<svg class="a" style="left:274.4px;top:587.0px" width="24" height="24" viewBox="0 0 24 24"><rect x="3" y="2" width="17" height="21" rx="1.5" fill="#b07a3a"/><rect x="20" y="5" width="2" height="4" fill="#5ab"/><rect x="20" y="10" width="2" height="4" fill="#ea4"/><circle cx="11.5" cy="11" r="3" fill="#a06a2a"/></svg>
<svg class="a" style="left:303.0px;top:587.0px" width="24" height="24" viewBox="0 0 24 24"><rect x="2.5" y="2" width="19" height="20" rx="1" fill="#fafafa"/><rect x="2.5" y="2" width="19" height="5.5" fill="#e83a3a"/><text x="12" y="19.5" text-anchor="middle" font-size="10.5" font-family="Liberation Sans" fill="#222">30</text><text x="12" y="6.5" text-anchor="middle" font-size="4" font-family="Liberation Sans" fill="#fff">МАРТ</text></svg>
<svg class="a" style="left:332.0px;top:587.0px" width="24" height="24" viewBox="0 0 24 24"><rect x="3" y="2" width="18" height="21" fill="#fdfbf0" stroke="#c8b88a" stroke-width="0.5"/><rect x="3" y="2" width="18" height="3.5" fill="#f8d030"/></svg>
<svg class="a" style="left:360.7px;top:587.0px" width="24" height="24" viewBox="0 0 24 24"><rect x="2" y="3" width="20" height="19" fill="#f4f0e0"/><path d="M2 8 L22 6 L22 9 L2 11Z" fill="#6ac"/><path d="M2 14 L14 12 L22 22 L2 22Z" fill="#f4e08a"/><rect x="5" y="10" width="5" height="4" fill="#48c"/><circle cx="17" cy="18" r="4.5" fill="#e8eef4" stroke="#aaa" stroke-width="0.6"/></svg>
<svg class="a" style="left:389.5px;top:587.0px" width="24" height="24" viewBox="0 0 24 24"><rect x="1.5" y="2" width="21" height="20" rx="4" fill="#4ad04a"/><rect x="4.5" y="8" width="10" height="8" rx="1" fill="#e8f4e8"/><circle cx="17.5" cy="17.5" r="5" fill="#f4f4f4"/><path d="M15.5 15.5 Q16 19 19.5 19.5" stroke="#4ad04a" stroke-width="1.3" fill="none"/></svg>
<svg class="a" style="left:418.3px;top:587.0px" width="24" height="24" viewBox="0 0 24 24"><circle cx="12" cy="12" r="11.5" fill="#f4f4f4"/><circle cx="12" cy="7" r="3.5" fill="#f8a020"/><circle cx="16.5" cy="9.5" r="3.5" fill="#c8d830" opacity="0.9"/><circle cx="16.5" cy="14.5" r="3.5" fill="#40b868" opacity="0.9"/><circle cx="12" cy="17" r="3.5" fill="#38a8e0" opacity="0.9"/><circle cx="7.5" cy="14.5" r="3.5" fill="#8a68d0" opacity="0.9"/><circle cx="7.5" cy="9.5" r="3.5" fill="#e84848" opacity="0.9"/></svg>
<svg class="a" style="left:447.0px;top:587.0px" width="24" height="24" viewBox="0 0 24 24"><path d="M3 5 L17 2 L21 20 L7 23Z" fill="#fbf6ec"/><path d="M3 5 L17 2 L17.7 5 L3.7 8Z" fill="#f4a040"/><rect x="6" y="9" width="7" height="5" fill="#5aa8e0" transform="rotate(-12 9 11)"/><path d="M19 3 L14 20" stroke="#d89020" stroke-width="1.5"/></svg>
<svg class="a" style="left:476.0px;top:587.0px" width="24" height="24" viewBox="0 0 24 24"><rect x="2" y="16" width="20" height="5" fill="#f4f4f4"/><rect x="4" y="12" width="3" height="7" fill="#e84848"/><rect x="8" y="8" width="3" height="11" fill="#f8a030"/><rect x="12" y="3" width="3" height="16" fill="#48c048"/><rect x="16" y="6" width="3" height="13" fill="#3898e8"/></svg>
<svg class="a" style="left:504.70000000000005px;top:587.0px" width="24" height="24" viewBox="0 0 24 24"><path d="M2 6 L22 6 L20 13 L4 13Z" fill="#2a7ad8"/><rect x="8" y="8" width="8" height="3" fill="#e8f0f8"/><path d="M12 13 L12 21" stroke="#ccd" stroke-width="1.2"/><ellipse cx="12" cy="21.5" rx="4" ry="1.3" fill="#ccd"/></svg>
<svg class="a" style="left:533.5px;top:587.0px" width="24" height="24" viewBox="0 0 24 24"><circle cx="12" cy="12" r="11.5" fill="#f4f4f8"/><circle cx="12" cy="12" r="11.5" fill="none" stroke="#c060d0" stroke-width="0.8"/><path d="M10 16 L10 6 L16 5 L16 14" stroke="#e83a78" stroke-width="1.6" fill="none"/><circle cx="8.5" cy="16" r="2" fill="#8a5ad8"/><circle cx="14.5" cy="14.5" r="2" fill="#4a8ae8"/></svg>
<svg class="a" style="left:562.8px;top:587.0px" width="24" height="24" viewBox="0 0 24 24"><circle cx="12" cy="12" r="11.5" fill="#f8f0e8"/><circle cx="12" cy="12" r="10.8" fill="#f07a20"/><path d="M4.5 8 Q8 7 11.5 8.5 L11.5 17 Q8 15.5 4.5 16.5Z M12.5 8.5 Q16 7 19.5 8 L19.5 16.5 Q16 15.5 12.5 17Z" fill="#fff"/></svg>
<svg class="a" style="left:591.6px;top:587.0px" width="24" height="24" viewBox="0 0 24 24"><circle cx="12" cy="12" r="11.5" fill="#e8eef4"/><circle cx="12" cy="12" r="10.8" fill="#2a8ae8"/><path d="M12 5 L6 18 M12 5 L18 18 M6 13 L18 13" stroke="#fff" stroke-width="1.4" fill="none"/></svg>
<svg class="a" style="left:621.3px;top:587.0px" width="24" height="24" viewBox="0 0 24 24"><rect x="1" y="1" width="22" height="22" rx="1" fill="#b4b8bc"/><circle cx="12" cy="12" r="9" fill="#3a3c3e"/><circle cx="12" cy="12" r="7" fill="#9a9c9e"/><circle cx="12" cy="12" r="5.5" fill="#3a3c3e"/><path d="M12 12 L12 6 M12 12 L17 15 M12 12 L7 15" stroke="#9a9c9e" stroke-width="1.3"/></svg>
<svg class="a" style="left:648.2px;top:586.0px" width="26" height="26" viewBox="0 0 24 24"><rect x="0" y="0" width="24" height="24" fill="#7a7c7a"/><path d="M0 0 L12 0 Q3 8 2 24 L0 24Z" fill="#2a2c2a"/><path d="M4 24 Q6 6 15 2 L17 2 Q9 8 7 24Z" fill="#1a1a18"/><path d="M16 2 Q22 10 22 24 L19 24 Q19 10 15 4Z" fill="#c8c8c8"/></svg>
<svg class="a" style="left:678.3px;top:587.0px" width="24" height="24" viewBox="0 0 24 24"><path d="M3 6 L14 2 L22 6 L21 18 L10 23 L3 18Z" fill="#e8403a"/><path d="M14 2 L22 6 L11 10 L3 6Z" fill="#f06058"/><path d="M7 9 L15 6 M7 12 L13 10 M9 15 L14 13" stroke="#fff" stroke-width="1.6"/></svg>
<svg class="a" style="left:718.9px;top:585.5px" width="27" height="27" viewBox="0 0 24 24"><path d="M1 4 L9 4 L11 6 L23 6 L23 22 L1 22Z" fill="#68c0f0"/><rect x="1" y="7" width="22" height="15" fill="#78c8f4"/><circle cx="12" cy="14.5" r="4" fill="#58a8d8"/><path d="M12 12 L12 16.5 M10 15 L12 17 L14 15" stroke="#78c8f4" stroke-width="1.2" fill="none"/></svg>
<svg class="a" style="left:748.0px;top:586.0px" width="26" height="26" viewBox="0 0 24 24"><rect x="0" y="5" width="24" height="14" fill="#fafafa"/><rect x="2" y="8" width="20" height="3" fill="#8a8a8a"/><circle cx="19" cy="19" r="3.5" fill="#2a7ad8"/></svg>
<svg class="a" style="left:777.0px;top:586.0px" width="26" height="26" viewBox="0 0 24 24"><rect x="0" y="5" width="24" height="14" fill="#fafafa"/><rect x="9" y="6" width="6" height="12" fill="#b8cce0"/><path d="M16 16 L20 15 L23 17 L22 22 L18 23 L16 21Z" fill="#e8403a"/></svg>
<svg class="a" style="left:805.8px;top:586.0px" width="26" height="26" viewBox="0 0 24 24"><rect x="0" y="5" width="24" height="14" fill="#fafafa"/><rect x="4" y="7" width="16" height="2" fill="#8a7a6a"/><rect x="10" y="8" width="6" height="4" fill="#6a4a2a"/><path d="M16 16 L20 15 L23 17 L22 22 L18 23 L16 21Z" fill="#e8403a"/></svg>
<svg class="a" style="left:834.6px;top:586.0px" width="26" height="26" viewBox="0 0 24 24"><path d="M3 4 L21 4 L19 23 L5 23Z" fill="#e4e6e8" opacity="0.92"/><ellipse cx="12" cy="4" rx="9" ry="2" fill="#f4f4f4"/></svg>
<div class="a" style="left:141.4px;top:614px;width:2.2px;height:2.2px;border-radius:50%;background:#0a0a0a"></div>
<div class="a" style="left:227.8px;top:614px;width:2.2px;height:2.2px;border-radius:50%;background:#0a0a0a"></div>
<div class="a" style="left:689.3px;top:614px;width:2.2px;height:2.2px;border-radius:50%;background:#0a0a0a"></div>
</body></html>
